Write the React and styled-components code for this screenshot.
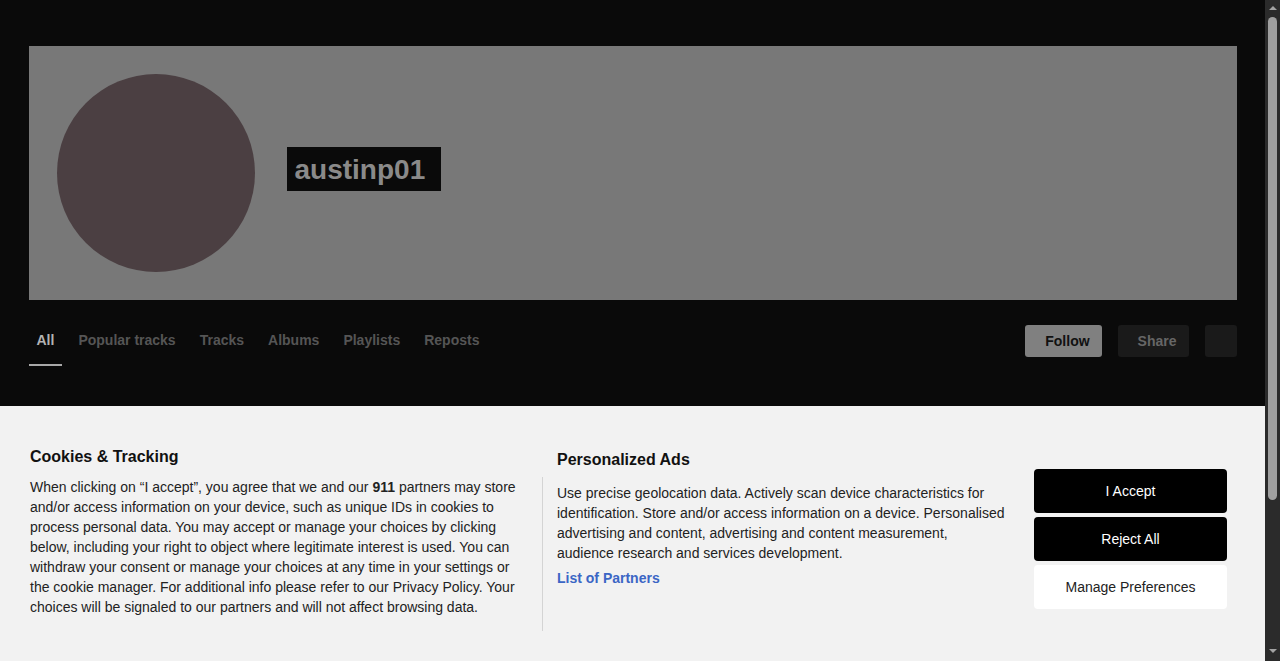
import React from "react";
import styled, { createGlobalStyle } from "styled-components";

const Global = createGlobalStyle`
  body {
    margin: 0;
    background: #0a0a0a;
    font-family: "Liberation Sans", Arial, sans-serif;
  }
`;

const Page = styled.div`
  min-height: 865px;
  margin-right: 15px;
  background: #0a0a0a;
  padding-top: 46px;
  box-sizing: border-box;
`;

const Container = styled.div`
  max-width: 1208px;
  margin: 0 auto;
`;

const Hero = styled.div`
  height: 254px;
  background: #787878;
  display: flex;
  align-items: flex-start;
  padding: 28px;
  box-sizing: border-box;
  gap: 32px;
`;

const Avatar = styled.div`
  width: 198px;
  height: 198px;
  border-radius: 50%;
  background: #4b3f42;
  flex-shrink: 0;
`;

const Username = styled.h1`
  margin: 73px 0 0;
  background: #0a0a0a;
  color: #8a8a8a;
  font-size: 28px;
  font-weight: 700;
  line-height: 44px;
  padding: 1px 16px 0 8px;
  height: 44px;
  box-sizing: border-box;
`;

const TabRow = styled.div`
  display: flex;
  align-items: flex-start;
  justify-content: space-between;
  margin-top: 25px;
`;

const Tabs = styled.nav`
  display: flex;
  gap: 8px;
`;

const Tab = styled.a`
  padding: 7px 8px 15px;
  line-height: 17px;
  font-size: 14px;
  font-weight: 700;
  color: ${(p) => (p.$active ? "#b3b3b3" : "#555555")};
  border-bottom: 2px solid ${(p) => (p.$active ? "#a8a8a8" : "transparent")};
  cursor: pointer;
`;

const Actions = styled.div`
  display: flex;
  gap: 16px;
`;

const ActionButton = styled.button`
  height: 32px;
  min-width: 32px;
  border: none;
  border-radius: 3px;
  padding: ${(p) => (p.$icon ? "0" : "0 12px 0 20px")};
  font-family: inherit;
  font-size: 14px;
  font-weight: 700;
  background: ${(p) => (p.$primary ? "#808080" : "#1a1a1a")};
  color: ${(p) => (p.$primary ? "#111111" : "#666666")};
`;

const Banner = styled.div`
  position: fixed;
  left: 0;
  right: 15px;
  bottom: 0;
  height: 255px;
  background: #f2f2f2;
  display: flex;
  align-items: flex-start;
  padding: 41px 38px 0 30px;
  box-sizing: border-box;
  color: #222;
`;

const ColOne = styled.div`
  width: 490px;
  flex-shrink: 0;
`;

const Heading = styled.h2`
  margin: 0;
  font-size: 16px;
  line-height: 19px;
  font-weight: 700;
  color: #111;
  padding-left: ${(p) => p.$indent || 0}px;
  margin-top: ${(p) => p.$top || 0}px;
`;

const Body = styled.p`
  margin: 11px 0 0;
  font-size: 14px;
  line-height: 20px;
  color: #222;
`;

const ColTwo = styled.div`
  margin-left: 22px;
  flex-shrink: 0;
`;

const Bordered = styled.div`
  margin-top: 8px;
  border-left: 1px solid #d4d4d4;
  padding: 6px 0 0 14px;
  height: 154px;
  box-sizing: border-box;
  width: 464px;
`;

const BodyTight = styled.p`
  margin: 0;
  width: 449px;
  font-size: 14px;
  line-height: 20px;
  color: #222;
`;

const PartnerLink = styled.a`
  display: block;
  margin-top: 5px;
  font-size: 14px;
  line-height: 20px;
  font-weight: 700;
  color: #3b66c5;
  cursor: pointer;
`;

const ButtonStack = styled.div`
  margin-left: 28px;
  margin-top: 22px;
  width: 193px;
  display: flex;
  flex-direction: column;
  gap: 4px;
`;

const ConsentButton = styled.button`
  height: 44px;
  border: none;
  border-radius: 4px;
  font-family: inherit;
  font-size: 14px;
  background: ${(p) => (p.$light ? "#ffffff" : "#000000")};
  color: ${(p) => (p.$light ? "#222222" : "#ffffff")};
  cursor: pointer;
`;

/* window scrollbar, drawn over the right edge */
const ScrollRail = styled.div`
  position: fixed;
  top: 0;
  right: 0;
  bottom: 0;
  width: 15px;
  background: #2b2b2b;
  display: flex;
  flex-direction: column;
  align-items: center;
`;

const Arrow = styled.div`
  width: 0;
  height: 0;
  border-left: 4px solid transparent;
  border-right: 4px solid transparent;
  ${(p) =>
    p.$down
      ? "border-top: 4px solid #a3a3a3; margin-top: auto; margin-bottom: 8px;"
      : "border-bottom: 4px solid #a3a3a3; margin-top: 6px;"}
`;

const Thumb = styled.div`
  width: 9px;
  height: 483px;
  margin-top: 7px;
  border-radius: 5px;
  background: #9f9f9f;
`;

const tabs = ["All", "Popular tracks", "Tracks", "Albums", "Playlists", "Reposts"];

export default function App() {
  return (
    <>
      <Global />
      <Page>
        <Container>
          <Hero>
            <Avatar />
            <Username>austinp01</Username>
          </Hero>
          <TabRow>
            <Tabs>
              {tabs.map((t, i) => (
                <Tab key={t} $active={i === 0}>
                  {t}
                </Tab>
              ))}
            </Tabs>
            <Actions>
              <ActionButton $primary>Follow</ActionButton>
              <ActionButton>Share</ActionButton>
              <ActionButton $icon aria-label="More" />
            </Actions>
          </TabRow>
        </Container>
      </Page>
      <Banner>
        <ColOne>
          <Heading>Cookies &amp; Tracking</Heading>
          <Body>
            When clicking on “I accept”, you agree that we and our <b>911</b> partners may store
            and/or access information on your device, such as unique IDs in cookies to process
            personal data. You may accept or manage your choices by clicking below, including your
            right to object where legitimate interest is used. You can withdraw your consent or
            manage your choices at any time in your settings or the cookie manager. For additional
            info please refer to our Privacy Policy. Your choices will be signaled to our partners
            and will not affect browsing data.
          </Body>
        </ColOne>
        <ColTwo>
          <Heading $indent={15} $top={3}>
            Personalized Ads
          </Heading>
          <Bordered>
            <BodyTight>
              Use precise geolocation data. Actively scan device characteristics for
              identification. Store and/or access information on a device. Personalised advertising
              and content, advertising and content measurement, audience research and services
              development.
            </BodyTight>
            <PartnerLink>List of Partners</PartnerLink>
          </Bordered>
        </ColTwo>
        <ButtonStack>
          <ConsentButton>I Accept</ConsentButton>
          <ConsentButton>Reject All</ConsentButton>
          <ConsentButton $light>Manage Preferences</ConsentButton>
        </ButtonStack>
      </Banner>
      <ScrollRail aria-hidden="true">
        <Arrow />
        <Thumb />
        <Arrow $down />
      </ScrollRail>
    </>
  );
}
